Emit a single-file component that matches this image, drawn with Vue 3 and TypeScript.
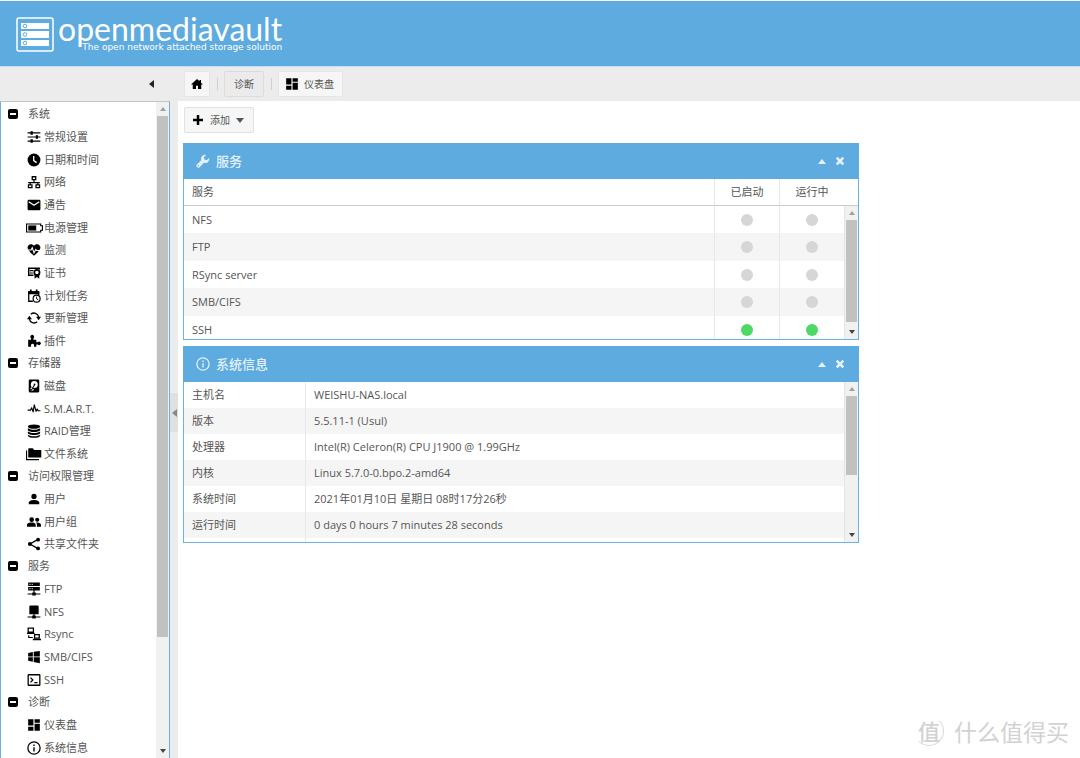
<script setup lang="ts">
import { reactive } from 'vue'

interface TreeItem { label: string; icon: string }
interface TreeGroup { label: string; open: boolean; items: TreeItem[] }

const icons: Record<string, string> = {
  tune: '<path d="M1 4h22v2H1zM1 11h22v2H1zM1 18h22v2H1zM6 2h4v6H6zM15 9h4v6h-4zM6 16h4v6H6z"/>',
  clock: '<circle cx="12" cy="12" r="11"/><path d="M11.5 5v8l5 3.5" fill="none" stroke="#fff" stroke-width="2.2"/>',
  network: '<path d="M9 3h6v5H9zM2.500 17h6v4.500h-6zM15.500 17h6v4.500h-6z" fill="none" stroke="currentColor" stroke-width="2.200"/><path d="M11 8h2v4h9v2H2v-2h9zM4.500 13h2v4h-2zM17.500 13h2v4h-2z"/>',
  mail: '<path d="M3 3h18a2 2 0 0 1 2 2v14a2 2 0 0 1-2 2H3a2 2 0 0 1-2-2V5a2 2 0 0 1 2-2z"/><path d="M3 6.500l9 6 9-6" fill="none" stroke="#fff" stroke-width="2.200"/>',
  battery: '<path d="M0 5h25v3h3v8h-3v3H0z" fill="none" stroke="currentColor" stroke-width="2"/><path d="M3 7.500h14v9H3z"/>',
  heart: '<path d="M12 22L10.500 20.600C5 15.500 1 12 1 7.700 1 4.300 3.700 2 6.800 2 9 2 11 3 12 4.700 13 3 15 2 17.200 2 20.300 2 23 4.300 23 7.700c0 4.300-4 7.800-9.500 12.900z"/><path d="M0 12h7l2-4 3 9 3-6 1.500 2H24" fill="none" stroke="#fff" stroke-width="1.800"/>',
  cert: '<path d="M11 16H3V4h18v2" fill="none" stroke="currentColor" stroke-width="2.500"/><path d="M5 7h6v2H5zM5 11h5v2H5z"/><circle cx="17" cy="11" r="4.500" fill="none" stroke="currentColor" stroke-width="3"/><path d="M13 14h8v8l-4-3-4 3z"/>',
  calendar: '<path d="M10 21H3V5h17v6" fill="none" stroke="currentColor" stroke-width="2.200"/><path d="M2 4h19v5H2zM5 1h3v4H5zM15 1h3v4h-3z"/><circle cx="16.500" cy="16.500" r="6" fill="#fff" stroke="currentColor" stroke-width="2"/><path d="M16.500 13v4l3 2" fill="none" stroke="currentColor" stroke-width="1.600"/>',
  sync: '<path d="M4 13.500a8.200 8.200 0 0 0 13.500 5M20 10.500A8.200 8.200 0 0 0 6.500 5.500" fill="none" stroke="currentColor" stroke-width="2.200"/><path d="M0 14l4-6 4.500 6zM24 10l-4 6-4.500-6z"/>',
  plugin: '<path d="M2 10h5V7.500a3.300 3.300 0 1 1 4 0V10h5v4h2.500a3 3 0 1 1 0 4H16v4h-4v-3a2.500 2.500 0 0 0-5 0v3H2z"/>',
  disk: '<path d="M5 1h14a2 2 0 0 1 2 2v18a2 2 0 0 1-2 2H5a2 2 0 0 1-2-2V3a2 2 0 0 1 2-2z"/><circle cx="12.500" cy="9.500" r="6" fill="#fff"/><path d="M6 15l3-1 3 5-5 2z" fill="#fff"/><path d="M7 20l6-10" stroke="currentColor" stroke-width="1.800"/><circle cx="13" cy="9" r="1.500"/>',
  pulse: '<path d="M1 14h5l2-4 2.500 7 2-12 3 11 2-4 1.500 3H23" fill="none" stroke="currentColor" stroke-width="2" stroke-linejoin="round"/>',
  database: '<ellipse cx="12" cy="4.500" rx="10.500" ry="3.800"/><path d="M1.500 7c2 4 19 4 21 0v3.500c-2 4-19 4-21 0zM1.500 12.500c2 4 19 4 21 0V16c-2 4-19 4-21 0zM1.500 18c2 4 19 4 21 0v2c-2 5-19 5-21 0z"/>',
  folders: '<path d="M4 2h7l2.500 3H25a1 1 0 0 1 1 1v12H3V3a1 1 0 0 1 1-1z"/><path d="M0 6v16h22" fill="none" stroke="currentColor" stroke-width="2"/>',
  user: '<circle cx="12" cy="7.500" r="4.500"/><path d="M3 21v-3c0-3 5-4.500 9-4.500s9 1.500 9 4.500v3z"/>',
  users: '<circle cx="8" cy="8" r="4"/><circle cx="17.500" cy="8" r="3.500"/><path d="M0 20v-3c0-3 5-4 8-4s7 1 7 4v3zM17 20v-3c0-1.500-.6-3-1.500-4 3.500 0 8.500 1 8.500 4v3z"/>',
  share: '<path d="M19 4L5 12l14 8" fill="none" stroke="currentColor" stroke-width="2.200"/><circle cx="19" cy="4.500" r="3.300"/><circle cx="5" cy="12" r="3.500"/><circle cx="19" cy="19.500" r="3.300"/>',
  server: '<path d="M2 1h20v6H2zM2 8.500h20v6H2zM11 14h2v5h-2zM1 19.500h22v2H1zM9 18h6v5H9z"/><path d="M4 4h2M8 4h2M4 11.500h2M8 11.500h2" stroke="#fff" stroke-width="1.600"/>',
  nas: '<path d="M6 1h12a2 2 0 0 1 2 2v13H4V3a2 2 0 0 1 2-2zM11 16h2v3h-2zM1 19.500h22v2H1zM9 18h6v5H9z"/>',
  remote: '<path d="M2 2h9v7H2zM13 13h8v6h-8z" fill="none" stroke="currentColor" stroke-width="2.200"/><path d="M0 10h13v2H0zM10 20h14v2.500H10z"/><path d="M3 14v4h5M6 18h4" fill="none" stroke="currentColor" stroke-width="2"/>',
  windows: '<path d="M2 5l8-1.500V11H2zM11.500 3.200L22 1.500V11H11.500zM2 12.500h8V20l-8-1.500zM11.500 12.500H22v10l-10.500-1.800z"/>',
  console: '<rect x="2" y="3" width="20" height="18" rx="1" fill="none" stroke="currentColor" stroke-width="2.200"/><path d="M6 8l4 4-4 4M12.500 16.500H18" fill="none" stroke="currentColor" stroke-width="2.200"/>',
  dashboard: '<path d="M2 2h9v11H2zM13 2h9v6h-9zM2 15h9v7H2zM13 10h9v12h-9z"/>',
  info: '<circle cx="12" cy="12" r="10.500" fill="none" stroke="currentColor" stroke-width="2.200"/><path d="M10.800 6h2.400v2.500h-2.400zM10.800 10.500h2.400V18h-2.400z"/>',
  home: '<path d="M12 2L0 13h3.500v9H10v-6.500h4V22h6.500v-9H24l-4-3.700V4h-3v2.600z"/>',
  plus: '<path d="M9.500 2h5v7.500H22v5h-7.500V22h-5v-7.500H2v-5h7.500z"/>',
  wrench: '<path d="M22.500 6.500l-4 4-4-1-1-4 4-4a7 7 0 0 0-8.600 9L1.500 17.800a3.300 3.300 0 0 0 4.700 4.700l7.300-7.400a7 7 0 0 0 9-8.600zM4 21.200a1.200 1.200 0 1 1 0-2.400 1.200 1.200 0 0 1 0 2.400z"/>',
  close: '<path d="M2 6l4-4 6 5.500L18 2l4 4-5.500 6L22 18l-4 4-6-5.500L6 22l-4-4 5.500-6z"/>',
}

const groups = reactive<TreeGroup[]>([
  { label: '系统', open: true, items: [
    { label: '常规设置', icon: 'tune' }, { label: '日期和时间', icon: 'clock' },
    { label: '网络', icon: 'network' }, { label: '通告', icon: 'mail' },
    { label: '电源管理', icon: 'battery' }, { label: '监测', icon: 'heart' },
    { label: '证书', icon: 'cert' }, { label: '计划任务', icon: 'calendar' },
    { label: '更新管理', icon: 'sync' }, { label: '插件', icon: 'plugin' } ] },
  { label: '存储器', open: true, items: [
    { label: '磁盘', icon: 'disk' }, { label: 'S.M.A.R.T.', icon: 'pulse' },
    { label: 'RAID管理', icon: 'database' }, { label: '文件系统', icon: 'folders' } ] },
  { label: '访问权限管理', open: true, items: [
    { label: '用户', icon: 'user' }, { label: '用户组', icon: 'users' }, { label: '共享文件夹', icon: 'share' } ] },
  { label: '服务', open: true, items: [
    { label: 'FTP', icon: 'server' }, { label: 'NFS', icon: 'nas' }, { label: 'Rsync', icon: 'remote' },
    { label: 'SMB/CIFS', icon: 'windows' }, { label: 'SSH', icon: 'console' } ] },
  { label: '诊断', open: true, items: [
    { label: '仪表盘', icon: 'dashboard' }, { label: '系统信息', icon: 'info' } ] },
])

const services = [
  { name: 'NFS', enabled: false, running: false },
  { name: 'FTP', enabled: false, running: false },
  { name: 'RSync server', enabled: false, running: false },
  { name: 'SMB/CIFS', enabled: false, running: false },
  { name: 'SSH', enabled: true, running: true },
]

const info = [
  ['主机名', 'WEISHU-NAS.local'],
  ['版本', '5.5.11-1 (Usul)'],
  ['处理器', 'Intel(R) Celeron(R) CPU J1900 @ 1.99GHz'],
  ['内核', 'Linux 5.7.0-0.bpo.2-amd64'],
  ['系统时间', '2021年01月10日 星期日 08时17分26秒'],
  ['运行时间', '0 days 0 hours 7 minutes 28 seconds'],
]

const isWide = (icon: string) => icon === 'battery' || icon === 'folders'
</script>

<template>
  <div class="page">
    <header class="banner">
      <svg class="logo" viewBox="0 0 38 36" aria-hidden="true">
        <rect x="1" y="1" width="36" height="33" rx="2" fill="none" stroke="#fff" stroke-width="1.500" />
        <g fill="#fff"><rect x="5" y="6" width="28" height="6" /><rect x="5" y="14" width="28" height="7" /><rect x="5" y="23" width="28" height="6" /></g>
        <g fill="none" stroke="#5dabdf"><circle cx="9" cy="9" r="1.800" /><circle cx="9" cy="17.500" r="1.800" /><circle cx="9" cy="26" r="1.800" /></g>
      </svg>
      <div class="brand">
        <span class="name">openmediavault</span>
        <span class="tagline">The open network attached storage solution</span>
      </div>
    </header>

    <div class="navbar">
      <div class="navbar-side">
        <button class="plain" aria-label="Collapse navigation">
          <svg class="tri-left" viewBox="0 0 5 8"><path d="M5 0v8L0 4z" /></svg>
        </button>
      </div>
      <nav class="crumbs">
        <button class="btn home" aria-label="Home"><svg class="icon small" viewBox="0 0 24 24" v-html="icons.home" /></button>
        <span class="sep" />
        <button class="btn pressed">诊断</button>
        <span class="sep" />
        <button class="btn"><svg class="icon" viewBox="0 0 24 24" v-html="icons.dashboard" />仪表盘</button>
      </nav>
    </div>

    <div class="workspace">
      <aside class="sidebar">
        <nav class="tree">
          <section v-for="g in groups" :key="g.label">
            <button class="group" :aria-expanded="g.open" @click="g.open = !g.open">
              <svg class="toggle" viewBox="0 0 10 10"><rect width="10" height="10" rx="2" /><path d="M2 4h6v2H2z" fill="#fff" /></svg>
              {{ g.label }}
            </button>
            <ul v-if="g.open">
              <li v-for="i in g.items" :key="i.label">
                <a href="#">
                  <span class="icon-slot"><svg class="icon" :class="{ wide: isWide(i.icon) }" :viewBox="isWide(i.icon) ? '-1 0 30 24' : '0 0 24 24'" v-html="icons[i.icon]" /></span>
                  {{ i.label }}
                </a>
              </li>
            </ul>
          </section>
        </nav>
        <div class="scroll">
          <svg class="arrow dim" viewBox="0 0 6 4"><path d="M0 4h6L3 0z" /></svg>
          <div class="track"><div class="thumb nav-thumb" /></div>
          <svg class="arrow" viewBox="0 0 6 4"><path d="M0 0h6L3 4z" /></svg>
        </div>
      </aside>
      <div class="splitter">
        <button aria-label="Toggle sidebar"><svg class="tri-left" viewBox="0 0 5 8"><path d="M5 0v8L0 4z" /></svg></button>
      </div>

      <main class="content">
        <button class="btn add">
          <svg class="icon small" viewBox="0 0 24 24" v-html="icons.plus" />添加
          <svg class="caret" viewBox="0 0 8 5"><path d="M0 0h8L4 5z" /></svg>
        </button>

        <section class="panel">
          <header>
            <svg class="icon" viewBox="0 0 24 24" v-html="icons.wrench" />
            <h2>服务</h2>
            <button class="plain" aria-label="Collapse"><svg class="caret" viewBox="0 0 8 5"><path d="M0 5h8L4 0z" /></svg></button>
            <button class="plain" aria-label="Close"><svg class="cross" viewBox="0 0 24 24" v-html="icons.close" /></button>
          </header>
          <div class="body">
            <table class="services">
              <thead>
                <tr><th scope="col">服务</th><th scope="col">已启动</th><th scope="col">运行中</th></tr>
              </thead>
              <tbody>
                <tr v-for="s in services" :key="s.name">
                  <td>{{ s.name }}</td>
                  <td><i class="dot" :class="{ on: s.enabled }" /></td>
                  <td><i class="dot" :class="{ on: s.running }" /></td>
                </tr>
              </tbody>
            </table>
            <div class="scroll over below-head">
              <svg class="arrow dim" viewBox="0 0 6 4"><path d="M0 4h6L3 0z" /></svg>
              <div class="track"><div class="thumb services-thumb" /></div>
              <svg class="arrow" viewBox="0 0 6 4"><path d="M0 0h6L3 4z" /></svg>
            </div>
          </div>
        </section>

        <section class="panel">
          <header>
            <svg class="icon" viewBox="0 0 24 24" v-html="icons.info" />
            <h2>系统信息</h2>
            <button class="plain" aria-label="Collapse"><svg class="caret" viewBox="0 0 8 5"><path d="M0 5h8L4 0z" /></svg></button>
            <button class="plain" aria-label="Close"><svg class="cross" viewBox="0 0 24 24" v-html="icons.close" /></button>
          </header>
          <div class="body">
            <table class="info">
              <tbody>
                <tr v-for="[k, v] in info" :key="k"><th scope="row">{{ k }}</th><td>{{ v }}</td></tr>
                <tr><th /><td /></tr>
              </tbody>
            </table>
            <div class="scroll over">
              <svg class="arrow dim" viewBox="0 0 6 4"><path d="M0 4h6L3 0z" /></svg>
              <div class="track"><div class="thumb info-thumb" /></div>
              <svg class="arrow" viewBox="0 0 6 4"><path d="M0 0h6L3 4z" /></svg>
            </div>
          </div>
        </section>
      </main>
    </div>

    <div class="watermark"><span class="seal">值</span>什么值得买</div>
  </div>
</template>

<style>
body { background: #fff; }
</style>

<style scoped>
.page {
  position: relative;
  display: flex;
  flex-direction: column;
  height: 100vh;
  overflow: hidden;
  box-sizing: border-box;
  border-top: 1px solid #fff;
  font: 11px/16px "Open Sans", "Noto Sans CJK SC", sans-serif;
  color: #555;
}
.page *, .page *::before { box-sizing: border-box; }
button { font: inherit; color: inherit; margin: 0; padding: 0; border: 0; background: none; cursor: pointer; }
svg { display: block; flex: none; fill: currentColor; overflow: visible; }
.icon { width: 14px; height: 14px; color: #000; }
.icon.wide { width: 17px; height: 14px; }

.banner {
  flex: none;
  display: flex;
  align-items: flex-start;
  gap: 4px;
  height: 66px;
  padding: 16px 16px 0;
  background: #5dabdf;
  border-bottom: 1px solid #c5dff0;
  color: #fff;
}
.logo { width: 38px; height: 36px; }
.brand { display: flex; flex-direction: column; align-items: flex-end; }
.name { font: 400 32px/24px Lato, sans-serif; }
.tagline { font: 9px/12px "DejaVu Sans", sans-serif; }

.navbar { flex: none; display: flex; height: 34px; background: #ececec; }
.navbar-side { width: 178px; display: flex; align-items: center; justify-content: flex-end; padding-right: 24px; color: #222; }
.tri-left { width: 5px; height: 8px; }
.crumbs { display: flex; align-items: center; padding-left: 6px; }
.btn {
  display: flex;
  align-items: center;
  justify-content: center;
  gap: 5px;
  height: 26px;
  padding: 0 8px 0 6px;
  border: 1px solid #e6e6e6;
  border-radius: 2px;
  background: #f6f6f6;
  font-size: 10px;
  color: #555;
}
.btn.home { width: 26px; padding: 0; }
.btn.pressed { padding: 0 9px; background: #ebebeb; border-color: #dcdcdc; }
.sep { width: 1px; height: 12px; margin: 0 6px 0 7px; background: #d0d0d0; }

.workspace { flex: 1; min-height: 0; display: flex; }
.sidebar {
  flex: none;
  width: 170px;
  display: flex;
  border: 1px solid #6ab2e2;
  border-top-color: #c4c4c4;
  border-bottom: 0;
  background: #fff;
}
.tree { flex: 1; overflow: hidden; padding-top: 1px; }
.tree ul { list-style: none; margin: 0; padding: 0; }
.group { display: flex; align-items: center; gap: 10px; width: 100%; height: 22px; padding-left: 7px; }
.toggle { width: 10px; height: 10px; color: #000; }
.tree a { display: flex; align-items: center; height: 23px; padding-left: 25px; color: inherit; text-decoration: none; white-space: nowrap; }
.tree li:nth-child(3n) a { height: 22px; }
.icon-slot { width: 16px; margin-right: 2px; display: flex; justify-content: center; }

.scroll { width: 13px; display: flex; flex-direction: column; align-items: center; background: #f1f1f1; }
.scroll .arrow { width: 6px; height: 4px; margin: 5px 0; color: #444; }
.scroll .arrow.dim { color: #a0a0a0; }
.track { flex: 1; width: 11px; }
.thumb { background: #c1c1c1; }
.nav-thumb { height: 83%; }
.services-thumb { height: 97%; }
.info-thumb { height: 60%; }
.scroll.over { position: absolute; top: 0; right: 0; bottom: 0; width: 14px; border-left: 1px solid #e4e4e4; }
.scroll.below-head { top: 27px; }

.splitter { flex: none; width: 8px; background: #ececec; display: flex; align-items: center; }
.splitter button { width: 8px; height: 39px; margin-bottom: 34px; background: #e0e0e0; color: #888; display: flex; align-items: center; justify-content: center; }

.content { flex: 1; min-width: 0; padding: 6px 5px; }
.add { margin: 0 0 10px 1px; padding: 0 9px 0 7px; gap: 6px; border-color: #e2e2e2; }
.icon.small { width: 12px; height: 12px; }
.caret { width: 8px; height: 5px; }

.panel { max-width: 676px; margin-bottom: 6px; border: 1px solid #6ab4e4; }
.panel header { display: flex; align-items: center; height: 36px; margin: -1px -1px 0; padding: 0 14px 0 13px; background: #5dabdf; color: #e4f1fa; gap: 6px; }
.panel header .icon { width: 14px; height: 14px; color: inherit; }
.panel h2 { flex: 1; margin: 0; font-size: 13px; line-height: 20px; font-weight: 500; }
.panel header .plain + .plain { margin-left: 3px; }
.cross { width: 10px; height: 10px; }
.body { position: relative; height: 160px; overflow: hidden; }
table { width: 100%; border-collapse: separate; border-spacing: 0; table-layout: fixed; }
th, td { padding: 0 8px; text-align: left; font-weight: 400; line-height: 16px; }
th + th, td + td, th + td { border-left: 1px solid #e8e8e8; }
thead th { height: 27px; border-bottom: 1px solid #ccc; }
tbody td { height: 27px; }
tbody tr:nth-child(even) > * { background: #f5f5f5; }
.services tbody tr:nth-child(even) td { height: 28px; }
.services th:nth-child(2) { width: 65px; padding: 0; text-align: center; }
.services td:nth-child(2) { padding: 0; text-align: center; }
.services th:nth-child(3) { width: 79px; padding: 0 14px 0 0; text-align: center; }
.services td:nth-child(3) { padding: 0 14px 0 0; text-align: center; }
.dot { display: block; width: 12px; height: 12px; margin: 0 auto; border-radius: 50%; background: #d6d6d6; }
.dot.on { background: #4cd964; }
.info th { width: 121px; height: 26px; }
.info td { height: 26px; }

.watermark {
  position: absolute;
  right: 11px;
  bottom: 9px;
  display: flex;
  align-items: center;
  gap: 10px;
  font: 23px/36px "Noto Sans CJK SC", sans-serif;
  color: #d2d2d2;
}
.seal { width: 30px; height: 30px; border: 1px solid #d8d8d8; border-left-color: transparent; border-top-color: transparent; border-radius: 50%; text-align: center; font-size: 22px; line-height: 26px; font-weight: 500; }
</style>
